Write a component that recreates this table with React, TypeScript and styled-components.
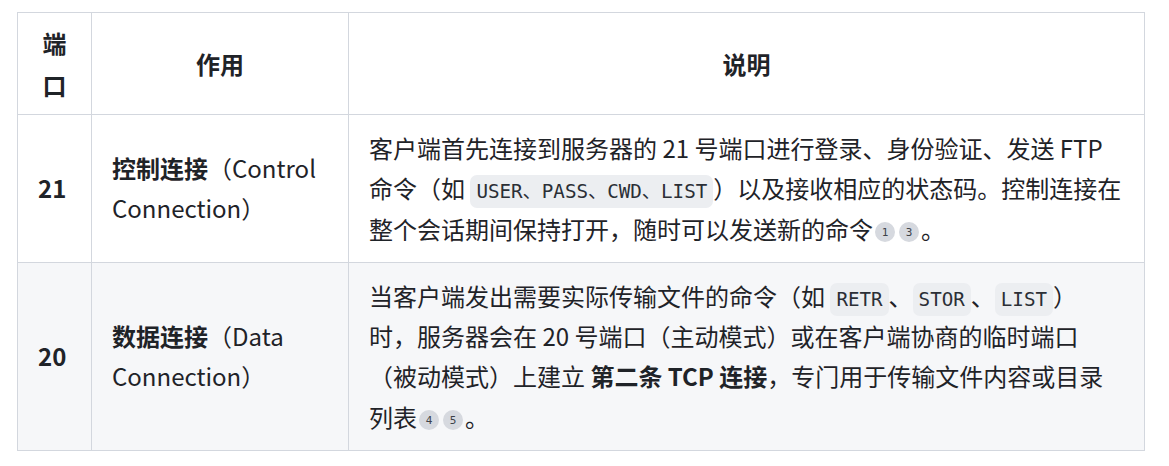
import React from "react";
import styled, { createGlobalStyle } from "styled-components";

const GlobalStyle = createGlobalStyle`
  body {
    margin: 0;
    background: #ffffff;
    font-family: "Noto Sans CJK SC", "Noto Sans", sans-serif;
    color: #1f2328;
  }
`;

const Page = styled.div`
  padding: 12px 0 0 17px;
`;

const Table = styled.table`
  width: 1128px;
  border-collapse: collapse;
  table-layout: fixed;
  font-size: 24px;
`;

const Head = styled.th`
  border: 1px solid #d3d7de;
  padding: 9px 18px;
  line-height: 41.5px;
  font-weight: 700;
  text-align: center;
  vertical-align: middle;
`;

const Row = styled.tr<{ $striped?: boolean }>`
  background: ${(p) => (p.$striped ? "#f6f7f9" : "#ffffff")};
`;

const Cell = styled.td<{ $bold?: boolean }>`
  border: 1px solid #d3d7de;
  padding: 13px 22px 13px 20px;
  line-height: 40.3px;
  vertical-align: middle;
  text-align: left;
  font-weight: ${(p) => (p.$bold ? 700 : 400)};
`;

const Strong = styled.strong`
  font-weight: 700;
`;

const Code = styled.code`
  font-family: "DejaVu Sans Mono", "Noto Sans CJK SC", monospace;
  font-size: 0.8em;
  line-height: 1;
  color: #2b2f36;
  background: #eceef1;
  border-radius: 7px;
  padding: 5px 6px;
`;

const Cite = styled.span`
  display: inline-flex;
  align-items: center;
  justify-content: center;
  width: 20px;
  height: 20px;
  margin: 0 2px;
  border-radius: 50%;
  background: #d6d9df;
  color: #3d4249;
  font-family: "DejaVu Sans Mono", monospace;
  font-size: 11px;
  line-height: 1;
  vertical-align: middle;
`;

export default function App() {
  return (
    <Page>
      <GlobalStyle />
      <Table>
        <colgroup>
          <col style={{ width: 74 }} />
          <col style={{ width: 257 }} />
          <col />
        </colgroup>
        <thead>
          <tr>
            <Head>端口</Head>
            <Head>作用</Head>
            <Head>说明</Head>
          </tr>
        </thead>
        <tbody>
          <Row>
            <Cell $bold>21</Cell>
            <Cell>
              <Strong>控制连接</Strong>（Control Connection）
            </Cell>
            <Cell>
              客户端首先连接到服务器的 21 号端口进行登录、身份验证、发送 FTP
              命令（如 <Code>USER、PASS、CWD、LIST</Code>）以及接收相应的状态码。控制连接在整个会话期间保持打开，随时可以发送新的命令
              <Cite>1</Cite>
              <Cite>3</Cite>。
            </Cell>
          </Row>
          <Row $striped>
            <Cell $bold>20</Cell>
            <Cell>
              <Strong>数据连接</Strong>（Data Connection）
            </Cell>
            <Cell>
              当客户端发出需要实际传输文件的命令（如 <Code>RETR</Code>、<Code>STOR</Code>、<Code>LIST</Code>
              ）时，服务器会在 20 号端口（主动模式）或在客户端协商的临时端口（被动模式）上建立{" "}
              <Strong>第二条 TCP 连接</Strong>，专门用于传输文件内容或目录列表
              <Cite>4</Cite>
              <Cite>5</Cite>。
            </Cell>
          </Row>
        </tbody>
      </Table>
    </Page>
  );
}
